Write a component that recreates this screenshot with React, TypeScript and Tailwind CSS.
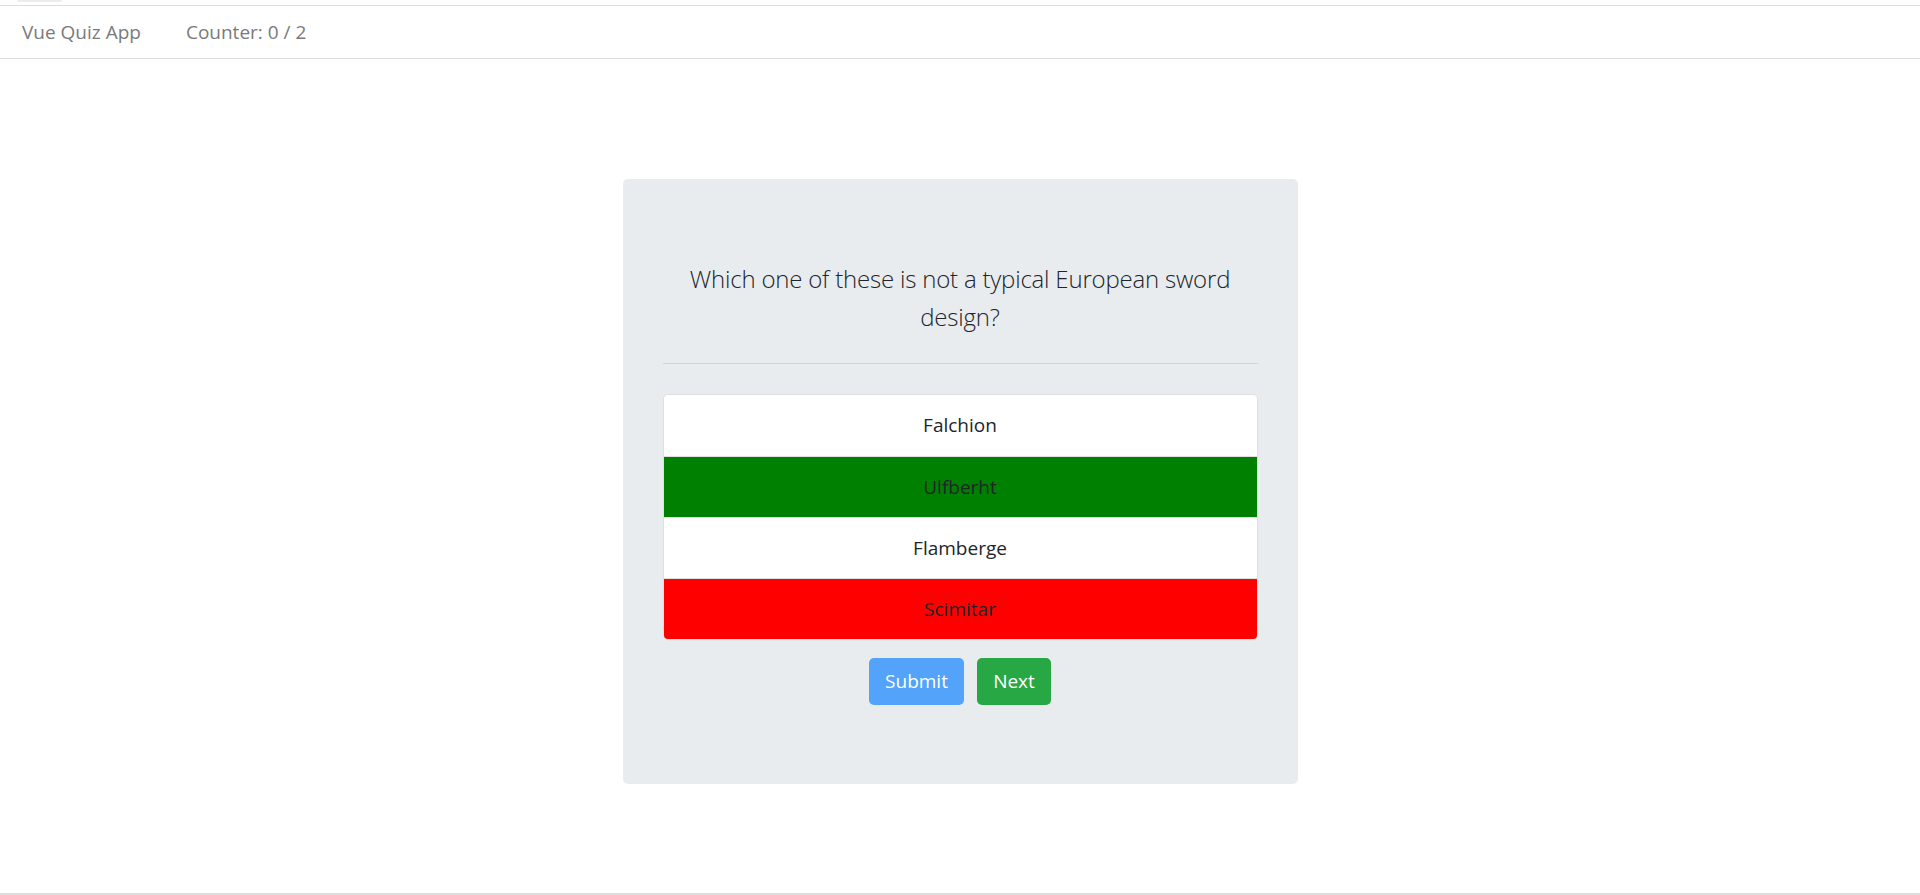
const answers = [
  { text: "Falchion", tone: "bg-white" },
  { text: "Ulfberht", tone: "bg-[#008000]" },
  { text: "Flamberge", tone: "bg-white" },
  { text: "Scimitar", tone: "bg-[#ff0000]" },
];

const App = () => {
  return (
    <div className="min-h-[895px] bg-white flex flex-col font-['Open_Sans','Noto_Sans',sans-serif] text-[#212529]">
      {/* leftover tab stub at the very top */}
      <div className="h-[5px] relative">
        <div className="absolute left-[17px] top-0 w-[45px] h-[2px] bg-[#ececec] rounded-b" />
      </div>

      {/* Navbar */}
      <nav className="h-[54px] border-y border-[#dddddd] flex items-center px-[20px] text-[19px] text-[#7a7a7a]">
        <span className="ml-[2px]">Vue Quiz App</span>
        <span className="ml-[45px]">Counter: 0 / 2</span>
      </nav>

      {/* Quiz card */}
      <main className="flex-1 flex flex-col">
        <div className="flex justify-center pt-[120px]">
          <div className="w-[675px] bg-[#e9ecef] rounded-[5px] px-[40px] pt-[81px] pb-[79px]">
            <p className="text-center text-[24px] leading-[37.5px] font-light tracking-[-0.2px] text-[#212529]">
              Which one of these is not a typical European sword design?
            </p>
            <hr className="mt-[28px] border-0 border-t border-[#d2d5d8]" />

            <ul className="mt-[30px] rounded-[5px] overflow-hidden border border-[#dfdfdf]">
              {answers.map((a, i) => (
                <li
                  key={a.text}
                  className={`${a.tone} h-[61px] flex items-center justify-center text-[19px] ${i > 0 ? "border-t border-[#dfdfdf]" : ""}`}
                >
                  {a.text}
                </li>
              ))}
            </ul>

            <div className="mt-[18px] flex justify-center gap-[13px]">
              <button className="h-[47px] w-[95px] rounded-[5px] bg-[#52a3f9] text-white text-[19px]">
                Submit
              </button>
              <button className="h-[47px] w-[74px] rounded-[5px] bg-[#28a745] text-white text-[19px]">
                Next
              </button>
            </div>
          </div>
        </div>
        <div className="flex-1" />
      </main>

      <div className="border-t-2 border-[#dcdcdc]" />
    </div>
  );
};

export default App;
